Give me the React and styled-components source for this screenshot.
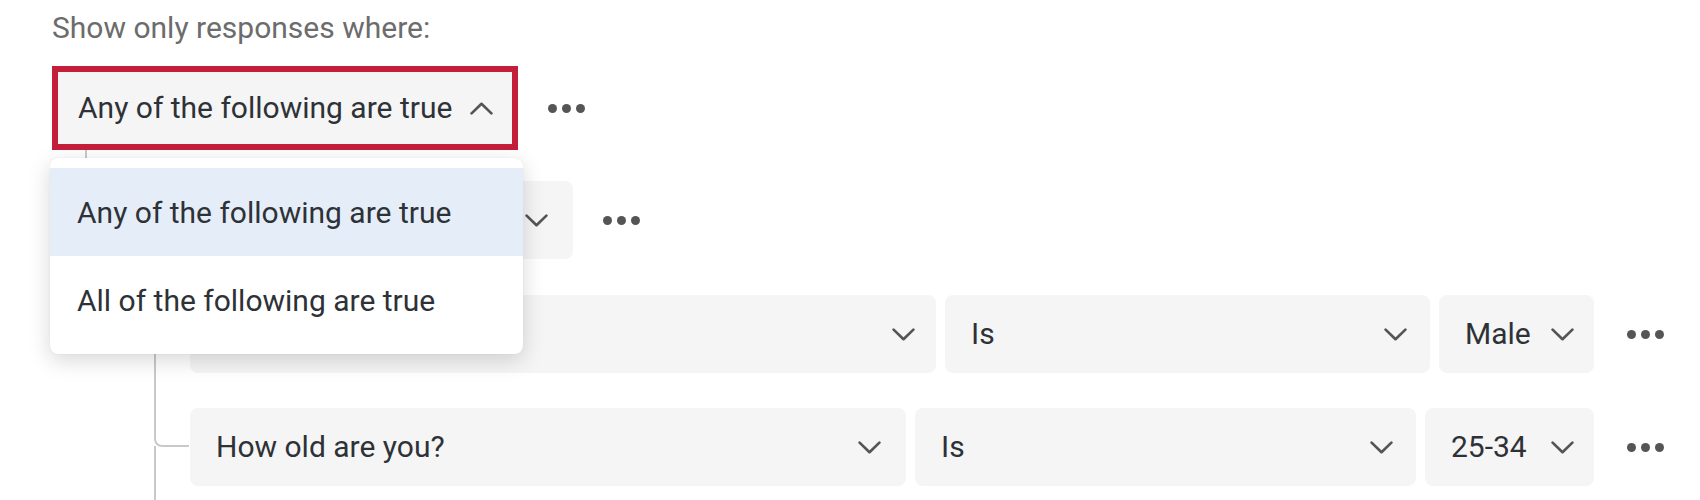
import React from "react";
import styled, { createGlobalStyle, css } from "styled-components";

const GlobalStyle = createGlobalStyle`
  html, body { margin: 0; padding: 0; background: #ffffff; }
  body { font-family: Roboto, "Liberation Sans", sans-serif; -webkit-font-smoothing: antialiased; }
`;

const Page = styled.div`
  padding: 10px 0 0 52px;
  height: 490px;
  overflow: hidden;
`;

const Heading = styled.div`
  font-size: 30px;
  line-height: 36px;
  color: #6c6c6c;
  margin-bottom: 20px;
`;

const Group = styled.div`
  position: relative;
`;

const HeaderRow = styled.div`
  display: flex;
  align-items: center;
`;

const SelectBox = styled.div`
  box-sizing: border-box;
  display: flex;
  align-items: center;
  justify-content: space-between;
  gap: 18px;
  flex: none;
  height: ${(p) => p.$h || 78}px;
  ${(p) => p.$w && css`width: ${p.$w}px;`}
  padding: 0 ${(p) => p.$pr || 23}px 0 26px;
  background: #f5f5f5;
  border-radius: ${(p) => (p.$focused ? 0 : 8)}px;
  font-size: 30px;
  line-height: 36px;
  color: #2e3237;
  white-space: nowrap;
  ${(p) =>
    p.$focused &&
    css`
      box-shadow: inset 0 0 0 6px #c41f3a;
    `}
`;

const Label = styled.span`
  overflow: hidden;
`;

const DotsButton = styled.div`
  display: flex;
  gap: 5px;
  margin-left: ${(p) => p.$gap || 30}px;
  flex: none;
`;

const Dot = styled.span`
  width: 9px;
  height: 9px;
  border-radius: 50%;
  background: #555555;
`;

const Fields = styled.div`
  display: flex;
  gap: 9px;
`;

const ChildList = styled.div`
  margin-left: 34px;
  display: flex;
  flex-direction: column;
`;

const ChildItem = styled.div`
  position: relative;
  padding-left: 35px;
  margin-top: ${(p) => p.$gap}px;

  &::before {
    content: "";
    position: absolute;
    left: -1px;
    top: -${(p) => p.$gap}px;
    height: ${(p) => p.$gap + 39}px;
    width: 35px;
    box-sizing: border-box;
    border-left: 2px solid #c9c9c9;
    border-bottom: 2px solid #c9c9c9;
    border-bottom-left-radius: 8px;
  }

  ${(p) =>
    !p.$last &&
    css`
      &::after {
        content: "";
        position: absolute;
        left: -1px;
        top: 38px;
        bottom: ${p.$open ? -60 : 0}px;
        border-left: 2px solid #c9c9c9;
      }
    `}
`;

const Menu = styled.div`
  position: absolute;
  z-index: 10;
  top: 92px;
  left: -2px;
  width: 473px;
  box-sizing: border-box;
  padding: 10px 0 10px;
  background: #ffffff;
  border-radius: 8px;
  box-shadow: 0 6px 22px rgba(0, 0, 0, 0.16), 0 0 1px rgba(0, 0, 0, 0.14);
`;

const MenuItem = styled.div`
  height: 88px;
  display: flex;
  align-items: center;
  padding-left: 27px;
  font-size: 30px;
  color: #2e3237;
  background: ${(p) => (p.$active ? "#e5eef8" : "transparent")};
`;

const Chevron = ({ up }) => (
  <svg width="23" height="13" viewBox="0 0 23 13" style={{ flex: "none" }}>
    <polyline
      points={up ? "1.6,11.4 11.5,1.8 21.4,11.4" : "1.6,1.6 11.5,11.2 21.4,1.6"}
      fill="none"
      stroke="#555555"
      strokeWidth="2.7"
      strokeLinecap="round"
      strokeLinejoin="round"
    />
  </svg>
);

const Dots = ({ gap }) => (
  <DotsButton $gap={gap}>
    <Dot />
    <Dot />
    <Dot />
  </DotsButton>
);

const Select = ({ label, up, w, pr, h, focused }) => (
  <SelectBox $w={w} $pr={pr} $h={h} $focused={focused}>
    <Label>{label}</Label>
    <Chevron up={up} />
  </SelectBox>
);

const rows = [
  { fields: [["", 746, 21], ["Is", 485, 23], ["Male", 155, 20]], gap: 36 },
  { fields: [["How old are you?", 716, 25], ["Is", 501, 23], ["25-34", 169, 20]], gap: 35, open: true },
];

export default function App() {
  return (
    <>
      <GlobalStyle />
      <Page>
        <Heading>Show only responses where:</Heading>
        <Group>
          <HeaderRow>
            <Select label="Any of the following are true" up h={84} pr={25} focused />
            <Dots gap={30} />
          </HeaderRow>
          <ChildList>
            <ChildItem $gap={31} $last>
              <HeaderRow>
                <Select label="" w={452} pr={25} />
                <Dots gap={30} />
              </HeaderRow>
              <ChildList>
                {rows.map((r, i) => (
                  <ChildItem key={i} $gap={r.gap} $open={r.open}>
                    <HeaderRow>
                      <Fields>
                        {r.fields.map(([label, w, pr], j) => (
                          <Select key={j} label={label} w={w} pr={pr} />
                        ))}
                      </Fields>
                      <Dots gap={33} />
                    </HeaderRow>
                  </ChildItem>
                ))}
              </ChildList>
            </ChildItem>
          </ChildList>
          <Menu>
            <MenuItem $active>Any of the following are true</MenuItem>
            <MenuItem>All of the following are true</MenuItem>
          </Menu>
        </Group>
      </Page>
    </>
  );
}
